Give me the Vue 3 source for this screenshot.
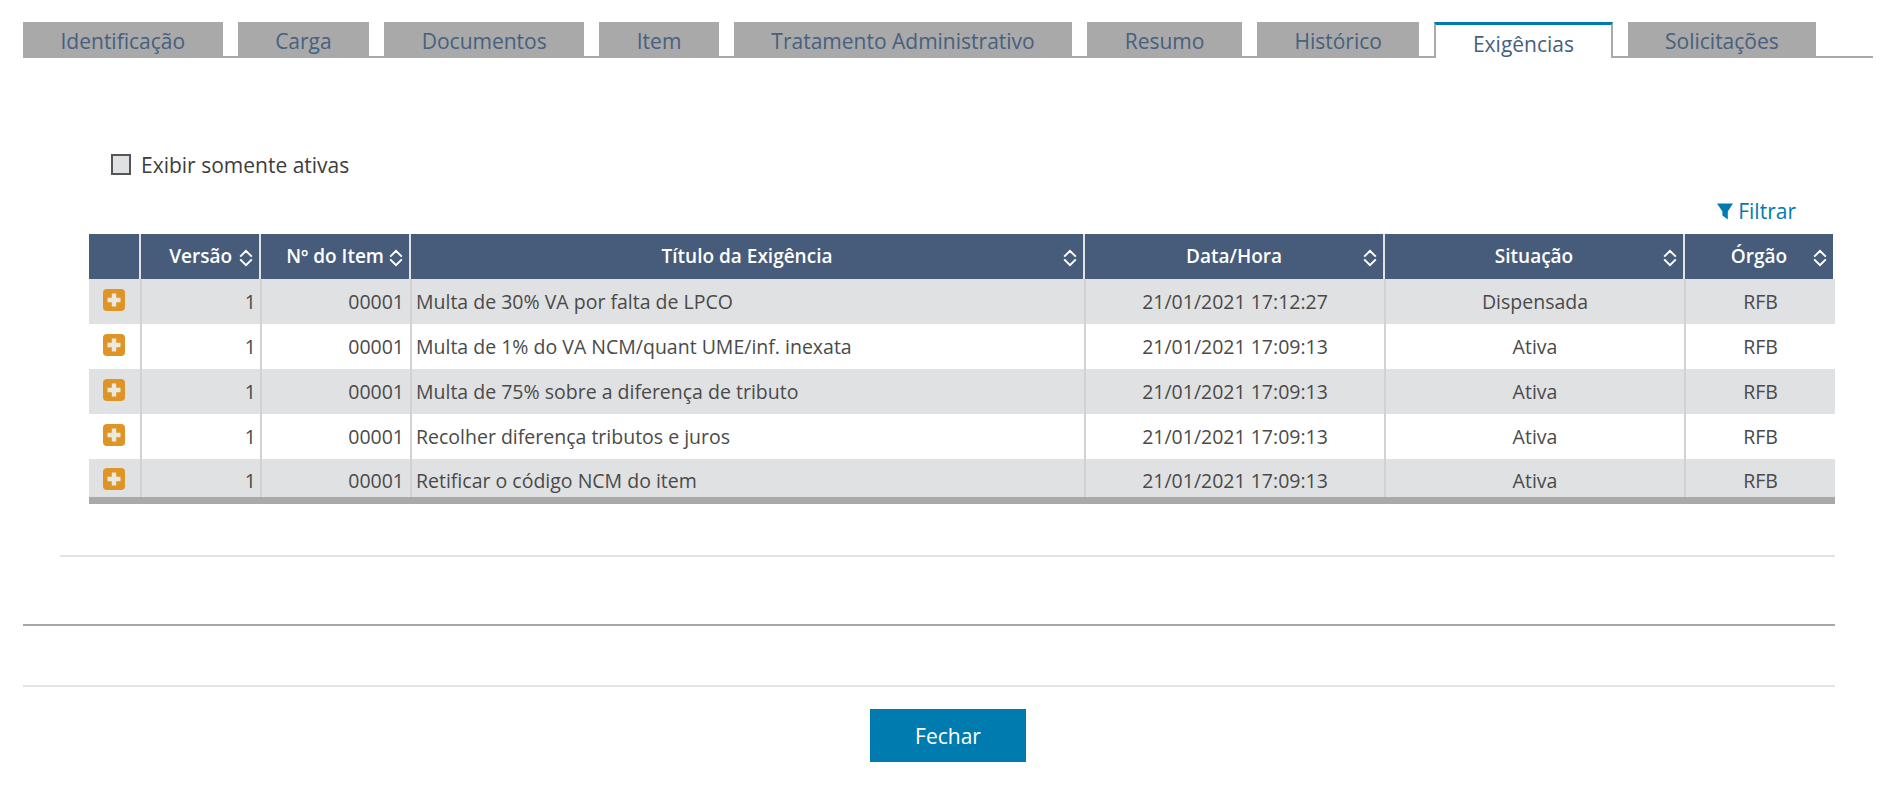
<script setup>
const tabs = ['Identificação','Carga','Documentos','Item','Tratamento Administrativo','Resumo','Histórico','Exigências','Solicitações']
const heads = [
  { t: '', cls: 'blank' },
  { t: 'Versão', cls: 'end' },
  { t: 'Nº do Item', cls: 'end item' },
  { t: 'Título da Exigência', cls: '' },
  { t: 'Data/Hora', cls: '' },
  { t: 'Situação', cls: '' },
  { t: 'Órgão', cls: 'last' },
]
const rows = [
  ['Multa de 30% VA por falta de LPCO','21/01/2021 17:12:27','Dispensada'],
  ['Multa de 1% do VA NCM/quant UME/inf. inexata','21/01/2021 17:09:13','Ativa'],
  ['Multa de 75% sobre a diferença de tributo','21/01/2021 17:09:13','Ativa'],
  ['Recolher diferença tributos e juros','21/01/2021 17:09:13','Ativa'],
  ['Retificar o código NCM do item','21/01/2021 17:09:13','Ativa'],
]
</script>

<template>
  <div class="page">
    <nav class="tabs">
      <a v-for="t in tabs" :key="t" class="tab" :class="{ active: t === 'Exigências' }">{{ t }}</a>
    </nav>

    <label class="check"><span class="box"></span>Exibir somente ativas</label>

    <div class="filter">
      <svg class="funnel" width="16" height="17" viewBox="0 0 16 17"><path d="M0 0.5h16L10.8 8.5V16.5L5.4 12.6V8.5Z" fill="#007bb0"/></svg>
      <span>Filtrar</span>
    </div>

    <div class="table">
      <div class="head">
        <div v-for="(h, i) in heads" :key="i" class="th" :class="h.cls">
          {{ h.t }}
          <svg v-if="i > 0" class="sort" width="14" height="18" viewBox="0 0 14 18" fill="none" stroke="#fff" stroke-width="2">
            <path d="M1.2 7.6 7 1.8 12.8 7.6M1.2 10.4 7 16.2 12.8 10.4"/>
          </svg>
        </div>
      </div>
      <div class="body">
        <div v-for="(r, i) in rows" :key="i" class="tr">
          <div class="td icon-cell">
            <svg class="plus" width="22" height="22" viewBox="0 0 22 22">
              <rect width="22" height="22" rx="4" fill="#df9426"/>
              <path d="M4.5 8.8H8.8V4.5H13.2V8.8H17.5V13.2H13.2V17.5H8.8V13.2H4.5Z" fill="#ece8de"/>
            </svg>
          </div>
          <div class="td num ver">1</div>
          <div class="td num">00001</div>
          <div class="td title">{{ r[0] }}</div>
          <div class="td mid">{{ r[1] }}</div>
          <div class="td mid">{{ r[2] }}</div>
          <div class="td mid last">RFB</div>
        </div>
      </div>
    </div>

    <hr class="rule inner" />
    <hr class="rule dark" />
    <hr class="rule light" />

    <div class="actions"><button class="close">Fechar</button></div>
  </div>
</template>

<style>
html, body { background: #fff; }
</style>

<style scoped>
.page {
  box-sizing: border-box;
  width: 1892px;
  height: 788px;
  overflow: hidden;
  padding: 22px 57px 0 23px;
  font-family: "Open Sans", sans-serif;
  font-size: 19.5px;
  color: #4a4a4a;
}
.tabs {
  display: flex;
  gap: 15px;
  height: 36px;
  margin-right: -38px;
  box-sizing: border-box;
  border-bottom: 2px solid #a9a9a9;
}
.tab {
  box-sizing: border-box;
  height: 36px;
  padding: 0 37.5px;
  line-height: 38px;
  background: #a9a9a9;
  color: #47607f;
  font-size: 21px;
}
.tab.active {
  height: 36px;
  padding: 0 36.5px;
  background: #fff;
  border-top: 3px solid #007bb0;
  border-left: 2px solid #a9a9a9;
  border-right: 2px solid #a9a9a9;
  line-height: 38px;
}
.check {
  display: flex;
  align-items: center;
  margin: 96px 0 0 88px;
  height: 21px;
  font-size: 21px;
  color: #3d3d3d;
}
.box {
  box-sizing: border-box;
  width: 20px;
  height: 21px;
  margin-right: 10px;
  background: #e0e1e3;
  border: 2px solid #555;
}
.filter {
  display: flex;
  justify-content: flex-end;
  align-items: center;
  gap: 5px;
  margin-top: 28px;
  margin-right: 39px;
  height: 16px;
  color: #007bb0;
  font-size: 21px;
}
.funnel { margin-top: 1px; }
.table {
  margin: 15px 0 0 66px;
  width: 1746px;
}
.head, .tr {
  display: grid;
}
.head {
  grid-template-columns: 52px 120px 150px 674px 300px 300px 148px;
  width: 1744px;
  height: 45px;
}
.tr {
  grid-template-columns: 53px 120px 150px 674px 300px 300px 149px;
  height: 45px;
}
.th {
  position: relative;
  box-sizing: border-box;
  background: #475c7a;
  color: #fff;
  font-weight: 600;
  font-size: 19px;
  line-height: 44px;
  text-align: center;
  border-right: 2px solid #e2e2e2;
}
.th.end { text-align: right; padding-right: 27px; }
.th.item { padding-right: 25px; }
.th.last { border-right: 0; }
.sort {
  position: absolute;
  right: 6px;
  top: 15px;
}
.body {
  height: 218px;
  overflow: hidden;
  border-bottom: 7px solid #a9a9a9;
}
.tr:nth-child(odd) { background: #e0e1e3; }
.td {
  box-sizing: border-box;
  line-height: 45px;
  border-right: 2px solid #d2d2d2;
  padding: 0 6px;
  white-space: nowrap;
  overflow: hidden;
}
.tr:last-child .td { line-height: 43px; }
.td.last { border-right: 0; }
.title { padding-left: 4px; }
.icon-cell { padding: 10px 0 0 14px; }
.tr:last-child .icon-cell { padding-top: 9px; }
.num { text-align: right; }
.ver { padding-right: 4px; }
.mid { text-align: center; }
.plus { display: block; }
.rule {
  border: 0;
  margin: 0;
  height: 2px;
}
.inner { margin: 51px 0 0 37px; background: #e2e2e2; }
.dark { margin-top: 67px; background: #a6a6a6; }
.light { margin-top: 59px; background: #e4e4e4; }
.actions {
  display: flex;
  justify-content: center;
  margin: 22px -57px 0 -23px;
  padding-left: 4px;
}
.close {
  width: 156px;
  height: 53px;
  border: 0;
  background: #007bb0;
  color: #fff;
  font-family: inherit;
  font-size: 21px;
}
</style>
